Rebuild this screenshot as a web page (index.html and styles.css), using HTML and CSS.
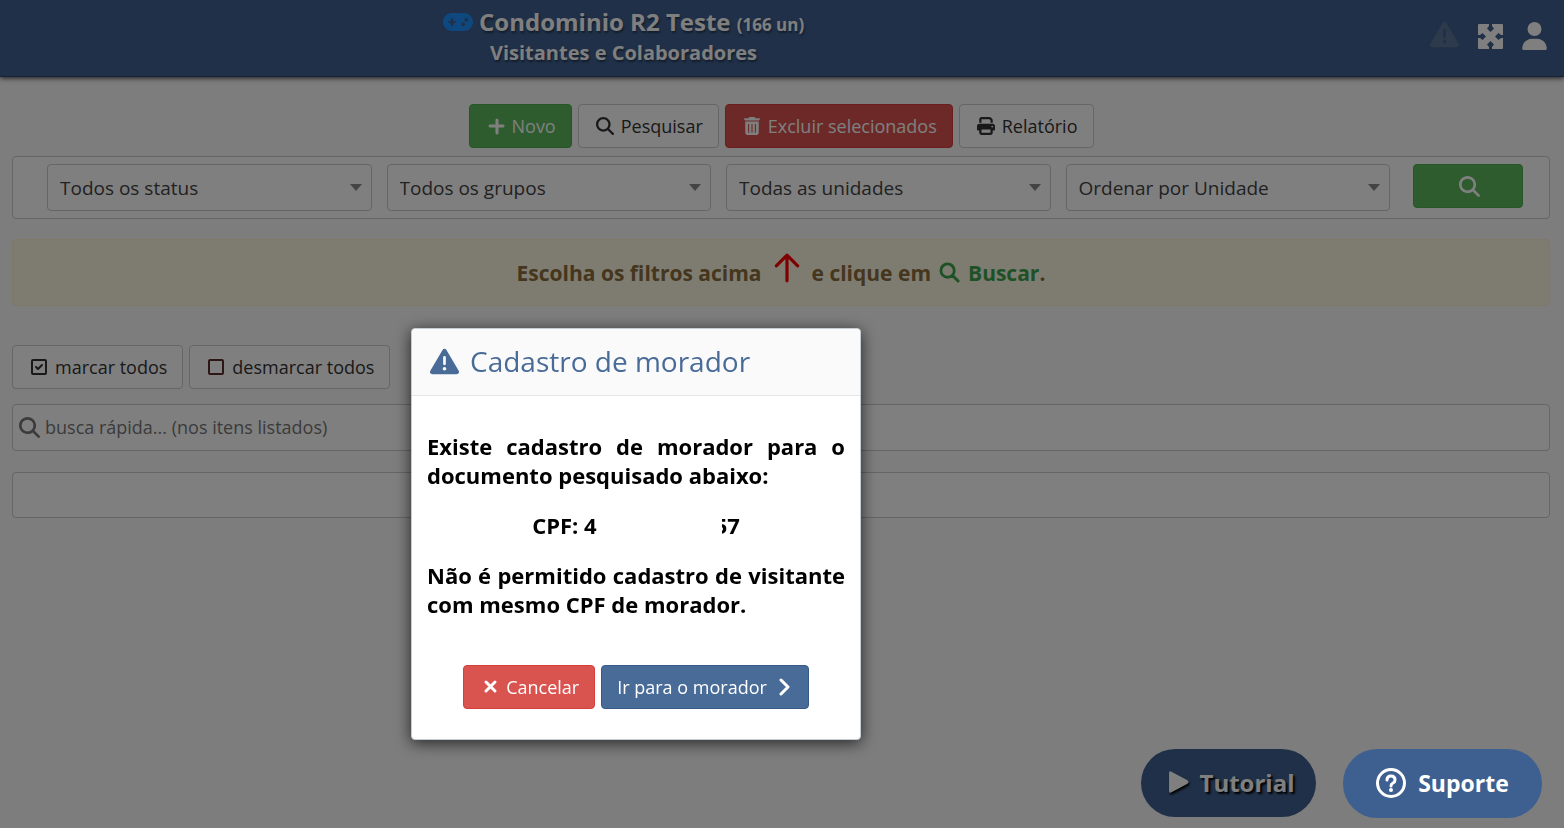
FILE: index.html
```html
<!DOCTYPE html>
<html lang="pt-BR">
<head>
    <meta charset="UTF-8">
    <meta name="viewport" content="width=device-width, initial-scale=1.0">
    <title>Visitantes e Colaboradores</title>
    <link rel="stylesheet" href="styles.css">
</head>
<body>
    <svg class="sprite" aria-hidden="true">
        <symbol id="i-search" viewBox="0 0 512 512"><path d="M416 208c0 45.9-14.9 88.3-40 122.7L502.6 457.4c12.5 12.5 12.5 32.8 0 45.3s-32.8 12.5-45.3 0L330.7 376c-34.4 25.2-76.8 40-122.7 40C93.1 416 0 322.9 0 208S93.1 0 208 0S416 93.1 416 208zM208 352a144 144 0 1 0 0-288 144 144 0 1 0 0 288z"/></symbol>
        <symbol id="i-warning" viewBox="0 0 512 512"><path d="M256 32c14.2 0 27.3 7.5 34.5 19.8l216 368c7.3 12.4 7.3 27.7 .2 40.1S486.3 480 472 480H40c-14.3 0-27.6-7.7-34.7-20.1s-7-27.8 .2-40.1l216-368C228.7 39.5 241.8 32 256 32zm0 128c-13.3 0-24 10.7-24 24V296c0 13.3 10.7 24 24 24s24-10.7 24-24V184c0-13.3-10.7-24-24-24zm32 224a32 32 0 1 0 -64 0 32 32 0 1 0 64 0z"/></symbol>
    </svg>

    <header class="topbar">
        <div class="topbar-title">
            <h1>
                <svg class="gamepad" viewBox="0 64 640 384"><path d="M192 64C86 64 0 150 0 256S86 448 192 448H448c106 0 192-86 192-192s-86-192-192-192H192zM496 168a40 40 0 1 1 0 80 40 40 0 1 1 0-80zM392 304a40 40 0 1 1 80 0 40 40 0 1 1 -80 0zM168 200c0-13.3 10.7-24 24-24s24 10.7 24 24v32h32c13.3 0 24 10.7 24 24s-10.7 24-24 24H216v32c0 13.3-10.7 24-24 24s-24-10.7-24-24V280H136c-13.3 0-24-10.7-24-24s10.7-24 24-24h32V200z"/></svg>
                Condominio R2 Teste <small>(166 un)</small>
            </h1>
            <h2>Visitantes e Colaboradores</h2>
        </div>
        <nav class="topbar-icons">
            <a href="#" class="muted" aria-label="Alertas"><svg class="icon-alert"><use href="#i-warning"/></svg></a>
            <a href="#" aria-label="Tela cheia"><svg class="icon-expand" viewBox="0 0 25 25"><path fill-rule="evenodd" d="M1 0H24Q25 0 25 1V24Q25 25 24 25H1Q0 25 0 24V1Q0 0 1 0zM11 0V2L9 4.5L12.5 8L16 4.5L14 2V0zM11 25V23L9 20.5L12.5 17L16 20.5L14 23V25zM0 11H2L4.500 9L8 12.500L4.500 16L2 14H0zM25 11H23L20.500 9L17 12.500L20.500 16L23 14H25z"/></svg></a>
            <a href="#" aria-label="Perfil"><svg class="icon-user" viewBox="0 0 448 512"><path d="M224 256A128 128 0 1 0 224 0a128 128 0 1 0 0 256zm-45.7 48C79.8 304 0 383.8 0 482.3C0 498.7 13.3 512 29.7 512H418.3c16.4 0 29.7-13.3 29.7-29.7C448 383.8 368.2 304 269.7 304H178.3z"/></svg></a>
        </nav>
    </header>

    <main class="content">
        <div class="toolbar">
            <button class="btn btn-success"><svg class="icon" viewBox="0 0 18 18"><path class="line medium" d="M10 3v13M3 9h13"/></svg>Novo</button>
            <button class="btn btn-default"><svg class="icon"><use href="#i-search"/></svg>Pesquisar</button>
            <button class="btn btn-danger"><svg class="icon" viewBox="0 0 448 512"><path fill-rule="evenodd" d="M135.2 17.7L128 32H32C14.3 32 0 46.3 0 64S14.3 96 32 96H416c17.7 0 32-14.3 32-32s-14.3-32-32-32H320l-7.2-14.3C307.4 6.8 296.3 0 284.2 0H163.8c-12.1 0-23.2 6.8-28.6 17.7zM32 128H416V448c0 35.3-28.7 64-64 64H96c-35.3 0-64-28.7-64-64V128zm96 64c-8.8 0-16 7.2-16 16V432c0 8.8 7.2 16 16 16s16-7.2 16-16V208c0-8.8-7.2-16-16-16zm96 0c-8.8 0-16 7.2-16 16V432c0 8.8 7.2 16 16 16s16-7.2 16-16V208c0-8.8-7.2-16-16-16zm96 0c-8.8 0-16 7.2-16 16V432c0 8.8 7.2 16 16 16s16-7.2 16-16V208c0-8.8-7.2-16-16-16z"/></svg>Excluir selecionados</button>
            <button class="btn btn-default"><svg class="icon" viewBox="0 0 512 512"><path d="M128 0C92.7 0 64 28.7 64 64v96h64V64H354.7L384 93.3V160h64V93.3c0-17-6.7-33.3-18.7-45.3L400 18.7C388 6.7 371.7 0 354.7 0H128zM384 352v32 64H128V384 368 352H384zm64 32h32c17.7 0 32-14.3 32-32V256c0-35.3-28.7-64-64-64H64c-35.3 0-64 28.7-64 64v96c0 17.7 14.3 32 32 32H64v64c0 35.3 28.7 64 64 64H384c35.3 0 64-28.7 64-64V384zM432 248a24 24 0 1 1 0 48 24 24 0 1 1 0-48z"/></svg>Relatório</button>
        </div>

        <form class="panel filters">
            <div class="select">
                <select aria-label="Status"><option>Todos os status</option></select>
            </div>
            <div class="select">
                <select aria-label="Grupos"><option>Todos os grupos</option></select>
            </div>
            <div class="select">
                <select aria-label="Unidades"><option>Todas as unidades</option></select>
            </div>
            <div class="select">
                <select aria-label="Ordenar"><option>Ordenar por Unidade</option></select>
            </div>
            <button type="button" class="btn btn-success btn-search" aria-label="Buscar"><svg class="icon-lg"><use href="#i-search"/></svg></button>
        </form>

        <div class="alert">
            <span>Escolha os filtros acima</span>
            <svg class="arrow-up" viewBox="0 0 24 30"><path class="line" d="M12 27V3M2 13L12 3l10 10"/></svg>
            <span>e clique em</span>
            <span class="buscar"><svg class="icon-lg" viewBox="0 0 22 22"><path class="line medium" d="M16 9A7 7 0 1 1 2 9A7 7 0 1 1 16 9M14 14l6 6"/></svg>Buscar<i>.</i></span>
        </div>

        <div class="marks">
            <button class="btn btn-default"><svg class="icon" viewBox="0 0 18 18"><rect class="line" x="2" y="2" width="14" height="14" rx="1"/><path class="line" d="M6 9l2 2 4-4"/></svg>marcar todos</button>
            <button class="btn btn-default"><svg class="icon icon-dark-red" viewBox="0 0 18 18"><rect class="line" x="2" y="2" width="14" height="14" rx="1"/></svg>desmarcar todos</button>
        </div>

        <div class="panel quick-search">
            <svg class="icon-lg"><use href="#i-search"/></svg>
            <input type="text" aria-label="busca rápida" placeholder="busca rápida... (nos itens listados)">
        </div>

        <div class="panel results"></div>
    </main>

    <button class="float-btn tutorial"><svg viewBox="0 0 20 22"><path d="M0 2Q0 -1 3 1L18 9q3 2 0 4L3 21Q0 23 0 20z"/></svg>Tutorial</button>

    <div class="backdrop"></div>

    <section class="modal" role="dialog" aria-labelledby="modal-title">
        <div class="modal-header">
            <svg><use href="#i-warning"/></svg>
            <h3 id="modal-title">Cadastro de morador</h3>
        </div>
        <div class="modal-body">
            <p>Existe cadastro de morador para o documento pesquisado abaixo:</p>
            <p class="cpf">CPF: 4<span class="mask"></span>57</p>
            <p>Não é permitido cadastro de visitante com mesmo CPF de morador.</p>
        </div>
        <div class="modal-footer">
            <button class="btn btn-danger"><svg class="icon" viewBox="0 0 18 18"><path class="line thick" d="M5 4l9 9M14 4L5 13"/></svg>Cancelar</button>
            <button class="btn btn-primary">Ir para o morador<svg class="icon" viewBox="0 0 18 18"><path class="line thick" d="M6 2l7 7-7 7"/></svg></button>
        </div>
    </section>

    <button class="float-btn suporte"><svg viewBox="0 0 30 30"><circle class="line" cx="15" cy="15" r="13.500"/><path class="line" d="M11 12q0-4 4-4t4 4q0 2-2 3t-2 3"/><circle cx="15" cy="22" r="2"/></svg>Suporte</button>
</body>
</html>
```
FILE: styles.css
```css
* {
    box-sizing: border-box;
}
body {
    margin: 0;
    font-family: "Open Sans", "Noto Sans", sans-serif;
    font-size: 18px;
    color: #333;
    background-color: #fafafa;
}
svg {
    fill: currentColor;
    flex: none;
}
.sprite {
    display: none;
}
.line {
    fill: none;
    stroke: currentColor;
    stroke-width: 2;
    stroke-linecap: round;
    stroke-linejoin: round;
}
.medium,
.thick {
    stroke-width: 3;
}
.icon {
    width: 18px;
    height: 18px;
}
.icon-lg {
    width: 21px;
    height: 21px;
}

/* top bar */
.topbar {
    display: flex;
    align-items: center;
    height: 77px;
    padding-bottom: 4px;
    background-color: #3e6090;
    border-bottom: 1px solid #2c4770;
    box-shadow: 0 1px 5px rgba(0, 0, 0, 0.8);
    color: #fff;
}
.topbar-title {
    flex: 1;
    text-align: center;
    text-shadow: 1px 2px 2px rgba(0, 0, 0, 0.4);
}
.topbar h1,
.topbar h2 {
    margin: 0;
    font-size: 24px;
    font-weight: 700;
    line-height: 30px;
}
.topbar h1 small {
    font-size: 17px;
}
.topbar h2 {
    font-size: 20px;
    line-height: 26px;
}
.gamepad {
    width: 30px;
    height: 18px;
    color: #1e90ff;
}
.topbar-icons {
    display: flex;
    justify-content: flex-end;
    align-items: center;
    gap: 19px;
    width: 317px;
    padding-right: 17px;
}
.topbar-icons a {
    display: flex;
    color: #fff;
}
.topbar-icons .muted {
    padding-bottom: 4px;
    color: #587497;
}
.icon-alert {
    width: 29px;
    height: 33px;
}
.icon-expand {
    width: 25px;
    height: 25px;
}
.icon-user {
    width: 25px;
    height: 28px;
}

/* buttons */
.btn {
    display: inline-flex;
    align-items: center;
    justify-content: center;
    gap: 7px;
    height: 44px;
    padding: 0 15px 0 17px;
    border: 1px solid transparent;
    border-radius: 4px;
    font-family: inherit;
    font-size: 18px;
    cursor: pointer;
}
.btn-default {
    background-color: #fff;
    border-color: #ccc;
    color: #333;
}
.btn-success {
    background-color: #5cb85c;
    border-color: #4cae4c;
    color: #fff;
}
.btn-danger {
    background-color: #d9534f;
    border-color: #d43f3a;
    color: #fff;
}
.btn-primary {
    background-color: #496b98;
    border-color: #385a88;
    color: #fff;
}

.content {
    padding: 27px 14px 0 12px;
}
.toolbar,
.marks {
    display: flex;
    gap: 6px;
}
.toolbar {
    justify-content: center;
    margin-bottom: 8px;
}
.panel {
    background-color: #fff;
    border: 1px solid #ccc;
    border-radius: 4px;
}

/* filters */
.filters {
    display: flex;
    gap: 15px;
    padding: 7px 26px 7px 34px;
}
.select {
    position: relative;
    flex: 1;
}
.select::after {
    content: "";
    position: absolute;
    top: 20px;
    right: 10px;
    border: 6px solid transparent;
    border-top: 7px solid #888;
    border-bottom: 0;
    pointer-events: none;
}
.select select {
    appearance: none;
    display: block;
    width: 100%;
    height: 47px;
    padding: 0 12px;
    border: 1px solid #ccc;
    border-radius: 4px;
    background-color: #fff;
    color: #444;
    font-family: inherit;
    font-size: 19px;
}
.btn-search {
    width: 110px;
    margin-left: 8px;
}

.alert {
    display: flex;
    align-items: center;
    justify-content: center;
    gap: 12px;
    height: 67px;
    margin: 20px 0 39px;
    background-color: #fcf8e3;
    border: 1px solid #faf2cc;
    border-radius: 4px;
    color: #8a6d3b;
    font-size: 21px;
    font-weight: 700;
}
.arrow-up {
    width: 26px;
    height: 32px;
    margin-bottom: 9px;
    color: #f00;
}
.arrow-up .line {
    stroke-width: 3;
}
.buscar {
    display: flex;
    align-items: center;
    margin-left: -4px;
    color: #3fa34d;
}
.buscar svg {
    margin-right: 8px;
}
.buscar i {
    color: #8a6d3b;
    font-style: normal;
}
.icon-dark-red {
    color: #5a2d2d;
}

.quick-search {
    display: flex;
    align-items: center;
    gap: 5px;
    height: 47px;
    margin: 15px 0 21px;
    padding: 0 6px;
    color: #777;
}
.quick-search input {
    flex: 1;
    border: 0;
    padding: 0 0 2px;
    outline: 0;
    background: none;
    font-family: inherit;
    font-size: 18px;
}
.quick-search input::placeholder {
    color: #777;
}
.results {
    height: 46px;
}

/* dialog */
.backdrop {
    position: fixed;
    inset: 0;
    background-color: rgba(0, 0, 0, 0.5);
}
.modal {
    position: fixed;
    top: 328px;
    left: 411px;
    width: 450px;
    background-color: #fff;
    border: 1px solid #c5ccd3;
    border-radius: 4px;
    box-shadow: 0 3px 16px rgba(0, 0, 0, 0.7);
    color: #000;
}
.modal-header {
    display: flex;
    align-items: center;
    gap: 11px;
    height: 67px;
    padding: 0 18px 2px;
    background-color: #fafafa;
    border-bottom: 1px solid #e5e5e5;
    border-radius: 4px 4px 0 0;
    color: #496b98;
}
.modal-header svg {
    width: 29px;
    height: 29px;
}
.modal-header h3 {
    margin: 0;
    font-size: 28px;
    font-weight: 400;
}
.modal-body {
    padding: 36px 15px 0;
    font-size: 22px;
    font-weight: 700;
    line-height: 29px;
    text-align: justify;
}
.modal-body p {
    margin: 0 0 21px;
}
.modal-body .cpf {
    text-align: center;
}
.mask {
    display: inline-block;
    position: relative;
    width: 125px;
    height: 24px;
    margin-right: -7px;
    background-color: #fff;
    vertical-align: middle;
}
.modal-footer {
    display: flex;
    justify-content: center;
    gap: 6px;
    padding: 25px 0 30px;
}
.modal-footer .btn-primary {
    gap: 8px;
    padding: 0 15px;
}

/* floating buttons */
.float-btn {
    position: fixed;
    display: flex;
    align-items: center;
    justify-content: center;
    border: 0;
    border-radius: 34px;
    background-color: #3e6090;
    color: #fff;
    font-family: inherit;
    font-weight: 700;
    cursor: pointer;
}
.tutorial {
    right: 248px;
    bottom: 11px;
    width: 175px;
    height: 68px;
    gap: 11px;
    padding: 0 0 2px 6px;
    font-size: 24px;
    text-shadow: 2px 2px 2px #000;
}
.tutorial svg {
    width: 20px;
    height: 22px;
    filter: drop-shadow(1px 2px 1px #000);
}
.suporte {
    right: 22px;
    bottom: 10px;
    width: 199px;
    height: 69px;
    gap: 12px;
    padding-bottom: 2px;
    font-size: 23px;
}
.suporte svg {
    width: 30px;
    height: 30px;
}
.suporte .line {
    stroke-width: 3;
}
```
